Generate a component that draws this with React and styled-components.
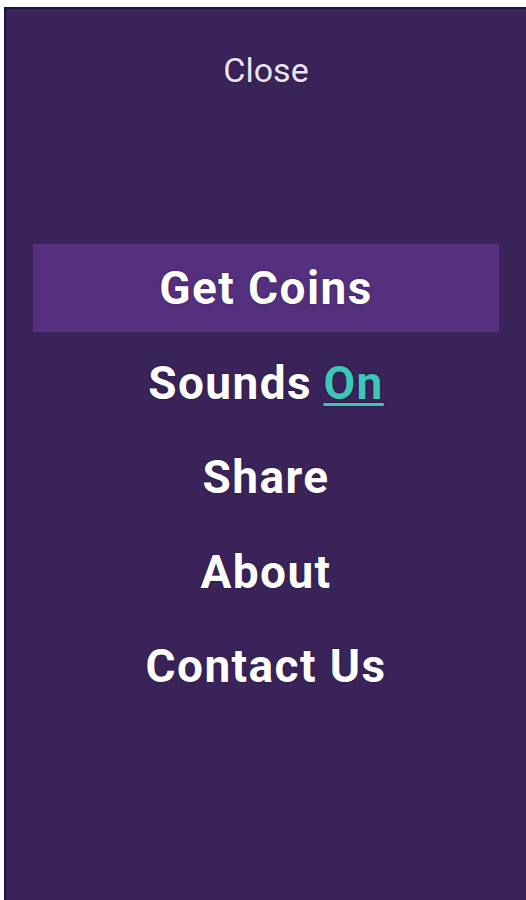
import React from "react";
import styled, { createGlobalStyle } from "styled-components";

const GlobalStyle = createGlobalStyle`
  html, body {
    margin: 0;
    padding: 0;
    background: #ffffff;
  }
  body {
    font-family: Roboto, "Liberation Sans", Arial, sans-serif;
  }
`;

const Frame = styled.div`
  width: 526px;
  height: 900px;
  padding: 7px 0 0 4px;
  box-sizing: border-box;
  background: #ffffff;
  overflow: hidden;
`;

const Panel = styled.div`
  height: 100%;
  background: #3a2358;
  border-top: 2px solid #1b1542;
  border-left: 2px solid #1b1542;
  box-sizing: border-box;
  display: flex;
  flex-direction: column;
`;

const CloseButton = styled.div`
  margin-top: 41px;
  text-align: center;
  font-size: 34px;
  line-height: 40px;
  color: #ece4f2;
  font-weight: 400;
  text-shadow: 0 0 2px rgba(20, 10, 40, 0.6);
`;

const Menu = styled.nav`
  margin-top: 154px;
  padding: 0 27px;
  display: flex;
  flex-direction: column;
  gap: 6.5px;
`;

const MenuItem = styled.div`
  height: 88px;
  display: flex;
  align-items: center;
  justify-content: center;
  font-size: 46px;
  font-weight: 700;
  letter-spacing: 1.4px;
  color: #ffffff;
  text-shadow: 0 0 2px rgba(20, 10, 40, 0.7);
  background: ${(p) => (p.$active ? "#55307f" : "transparent")};
`;

const Toggle = styled.span`
  color: #3ec6b6;
  text-decoration: underline;
  text-decoration-thickness: 3px;
  text-underline-offset: 4px;
  margin-left: 0.25em;
`;

const items = ["Share", "About", "Contact Us"];

export default function App() {
  return (
    <>
      <GlobalStyle />
      <Frame>
        <Panel>
          <CloseButton>Close</CloseButton>
          <Menu>
            <MenuItem $active>Get Coins</MenuItem>
            <MenuItem>
              Sounds<Toggle>On</Toggle>
            </MenuItem>
            {items.map((item) => (
              <MenuItem key={item}>{item}</MenuItem>
            ))}
          </Menu>
        </Panel>
      </Frame>
    </>
  );
}
